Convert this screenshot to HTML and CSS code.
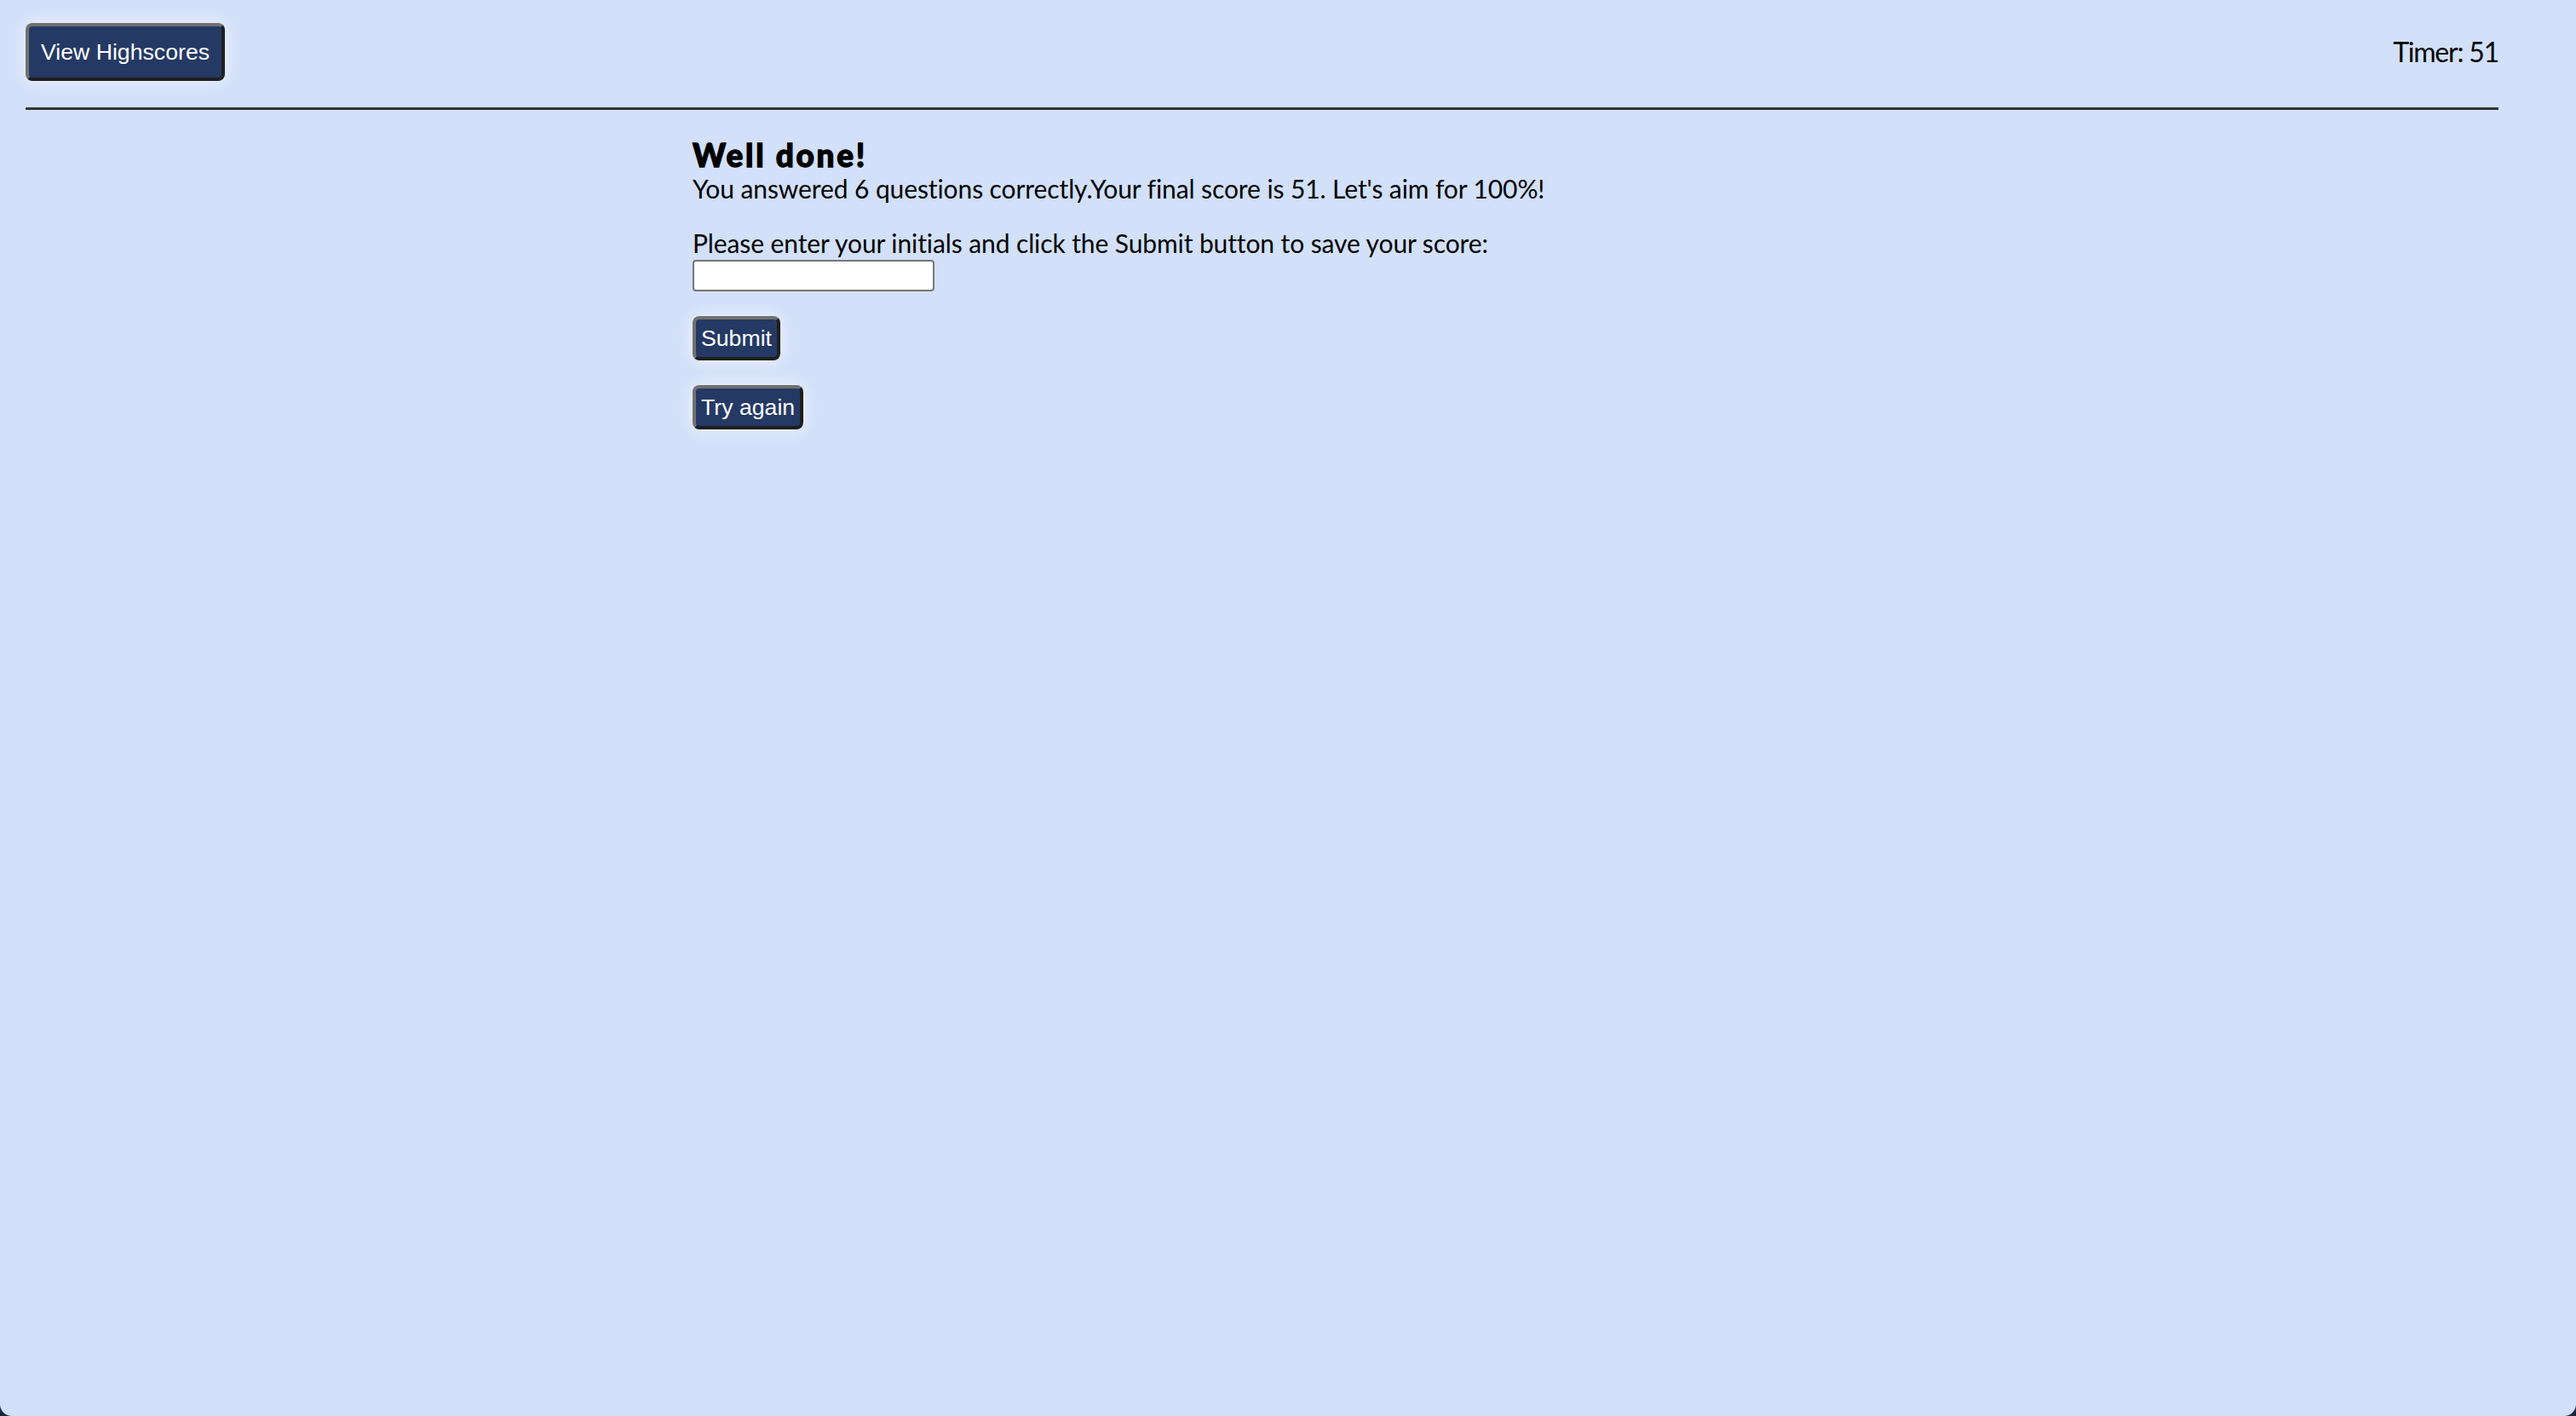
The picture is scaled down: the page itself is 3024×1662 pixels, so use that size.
FILE: index.html
```html
<!DOCTYPE html>
<html lang="en">
<head>
<meta charset="utf-8">
<title>Quiz</title>
<link rel="stylesheet" href="styles.css">
</head>
<body>
<div class="page">
  <header class="topbar">
    <button class="btn btn-lg" type="button">View Highscores</button>
    <div class="timer">Timer: 51</div>
  </header>
  <hr class="divider">
  <main class="content">
    <h3 class="title">Well done!</h3>
    <p class="result">You answered 6 questions correctly.Your final score is 51. Let's aim for 100%!</p>
    <label class="label" for="initials">Please enter your initials and click the Submit button to save your score:</label>
    <input class="initials" id="initials" type="text">
    <div class="actions">
      <button class="btn" type="button">Submit</button>
      <button class="btn" type="button">Try again</button>
    </div>
  </main>
</div>
</body>
</html>
```
FILE: styles.css
```css
html {
  background: #1d2547;
}
body {
  margin: 0;
}
.page {
  min-height: 100vh;
  box-sizing: border-box;
  background: #d2e0f9;
  border-radius: 0 0 14px 14px;
  font-family: Lato, "Open Sans", sans-serif;
  color: #000;
  overflow: hidden;
}
.topbar {
  width: 96%;
  margin-left: 30px;
  padding-top: 27px;
  display: flex;
  justify-content: space-between;
  align-items: center;
}
.btn {
  display: block;
  font-family: "Liberation Sans", Arial, sans-serif;
  font-size: 26.67px;
  line-height: 32px;
  color: #fff;
  background: #253965;
  border: 4px solid;
  border-color: #707070 #1f1f1f #1f1f1f #707070;
  border-radius: 8px;
  padding: 6px 6px;
  box-shadow: 0 0 20px rgba(255, 255, 255, 0.75);
  cursor: pointer;
}
.btn-lg {
  padding: 14px 14px;
}
.timer {
  font-size: 32px;
  letter-spacing: -1.2px;
  line-height: 40px;
}
.divider {
  width: 96%;
  height: 3px;
  margin: 31px 0 0 30px;
  border: 0;
  background: #333;
}
.content {
  width: 1398px;
  margin: 32px auto 0;
}
.title {
  margin: 0;
  font-size: 37px;
  font-weight: 900;
  letter-spacing: 2.7px;
  line-height: 42px;
  -webkit-text-stroke: 1.3px #000;
}
.result {
  margin: 0;
  font-size: 30px;
  letter-spacing: -0.1px;
  line-height: 36px;
}
.label {
  display: block;
  margin-top: 28px;
  font-size: 30px;
  letter-spacing: -0.1px;
  line-height: 36px;
}
.initials {
  display: block;
  margin: 2px 0 0;
  width: 284px;
  height: 37px;
  box-sizing: border-box;
  border: 2px solid #767676;
  border-radius: 4px;
  background: #fff;
  padding: 0 4px;
}
.actions {
  display: flex;
  flex-direction: column;
  align-items: flex-start;
  gap: 29px;
  margin-top: 29px;
}
```
